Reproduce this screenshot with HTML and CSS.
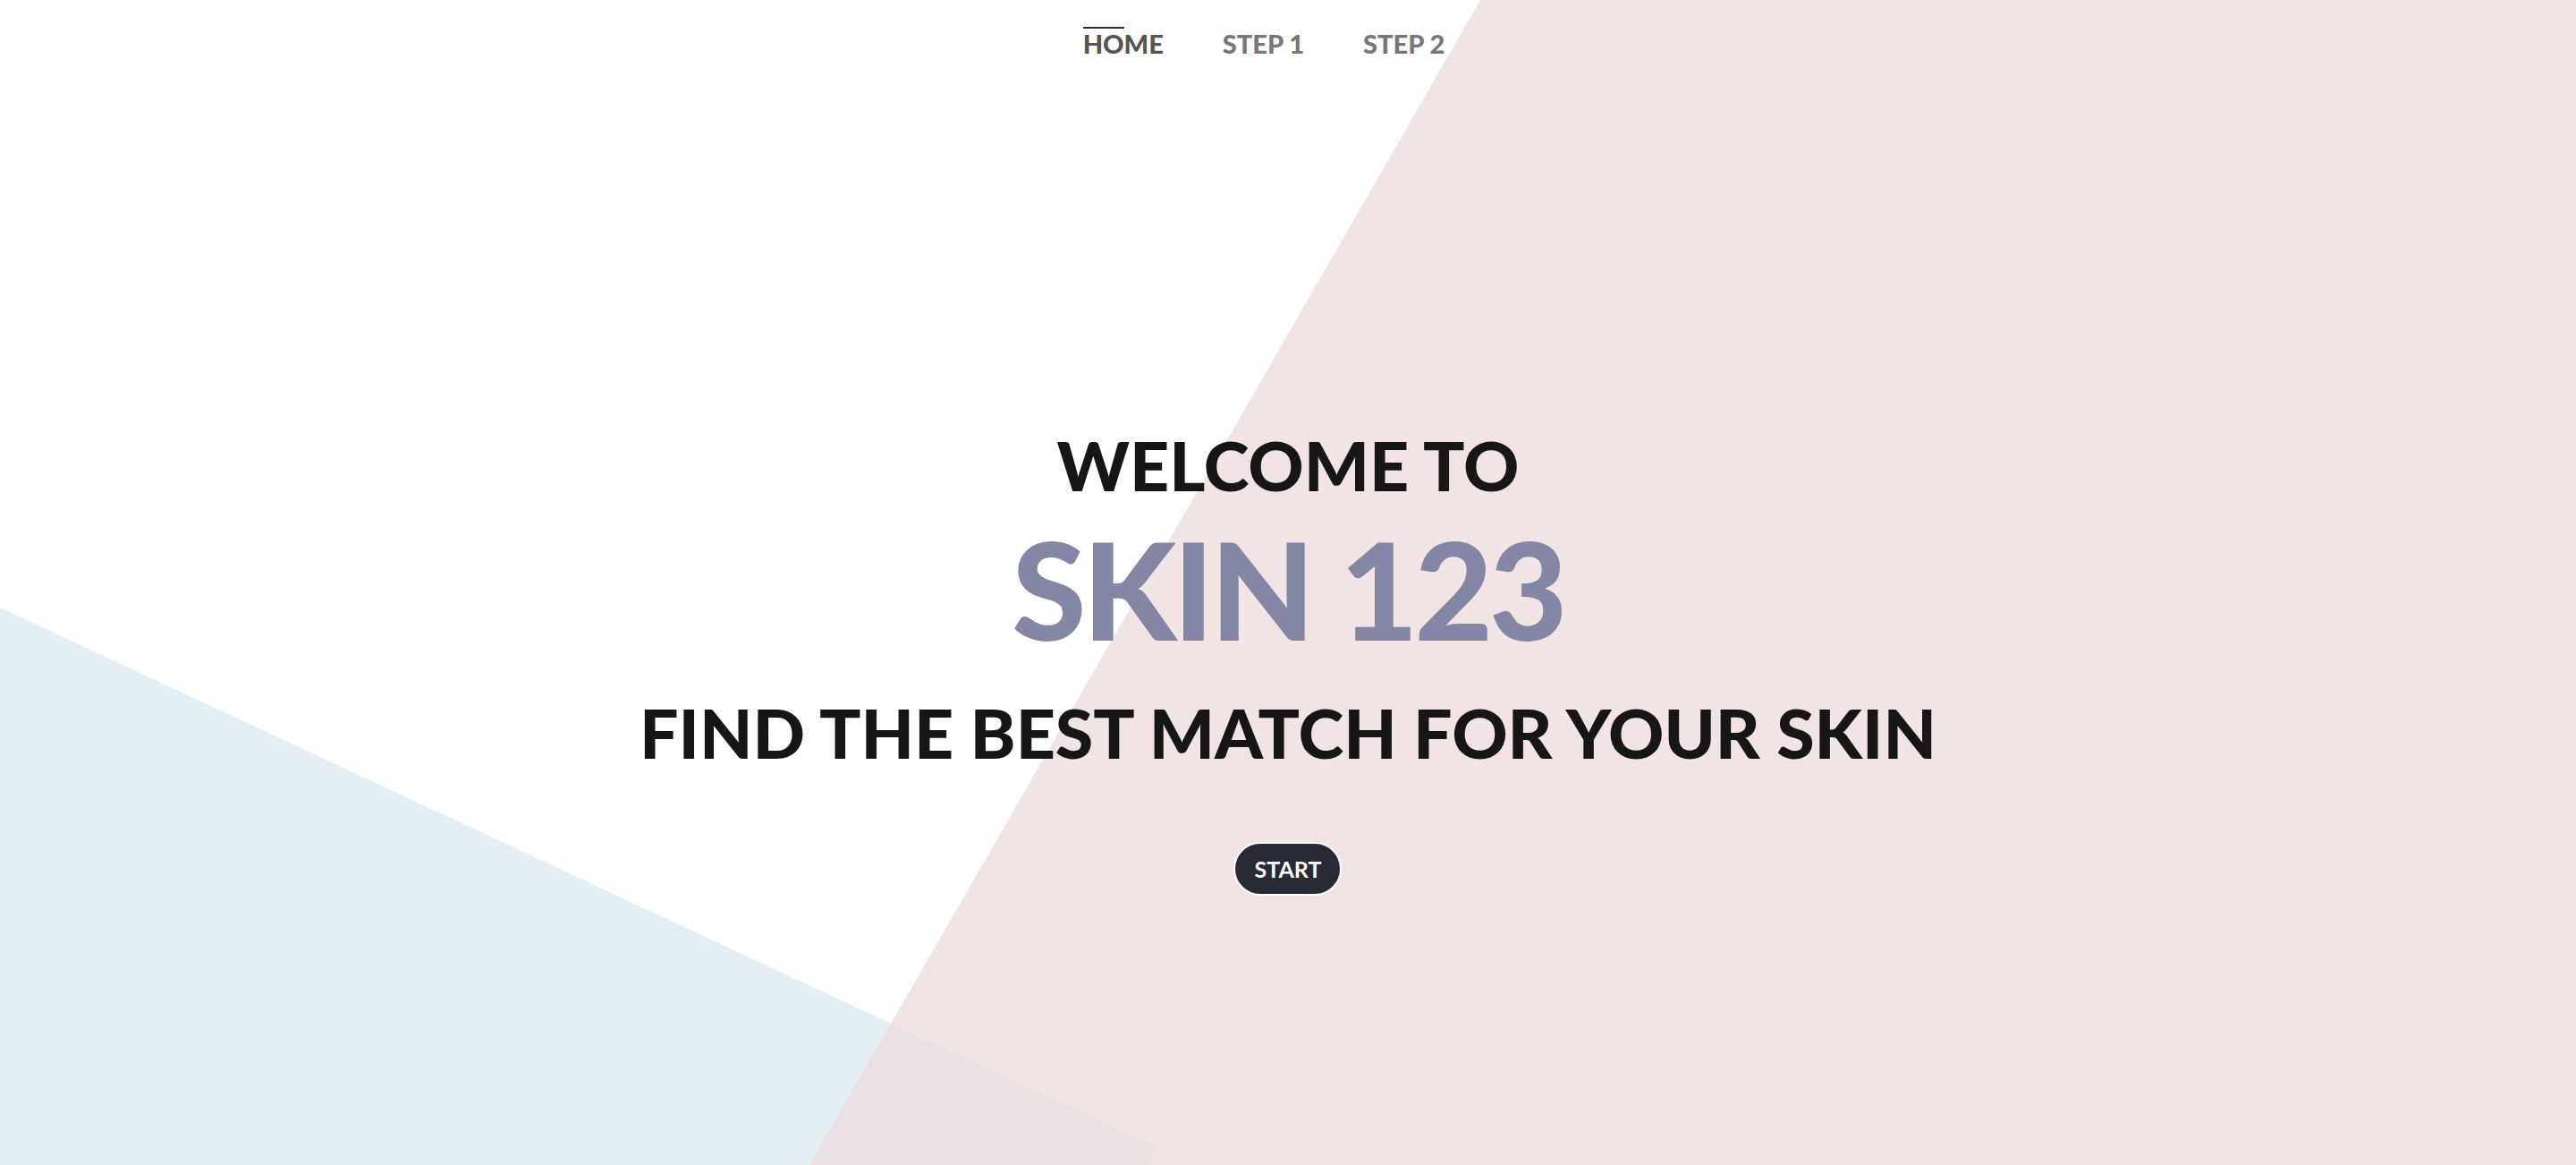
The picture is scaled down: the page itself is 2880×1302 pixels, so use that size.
FILE: index.html
```html
<!DOCTYPE html>
<html lang="en">
<head>
<meta charset="utf-8">
<title>Skin 123</title>
<link rel="stylesheet" href="styles.css">
</head>
<body>
<svg class="bg" viewBox="0 0 2880 1302" preserveAspectRatio="none" aria-hidden="true">
  <polygon class="blue" points="0,679 1292,1282 1283,1302 0,1302"/>
  <polygon class="pink" points="1655,0 2880,0 2880,1302 905,1302"/>
</svg>
<div class="page">
  <nav class="nav">
    <a class="nav-link active" href="#">HOME</a>
    <a class="nav-link" href="#">STEP 1</a>
    <a class="nav-link" href="#">STEP 2</a>
  </nav>
  <main class="hero">
    <h2 class="welcome">WELCOME TO</h2>
    <h1 class="brand">SKIN 123</h1>
    <h3 class="tagline">FIND THE BEST MATCH FOR YOUR SKIN</h3>
    <button class="start">START</button>
  </main>
</div>
</body>
</html>
```
FILE: styles.css
```css
html, body {
  margin: 0;
  padding: 0;
  width: 2880px;
  height: 1302px;
  overflow: hidden;
  background: #ffffff;
  font-family: "Lato", "Liberation Sans", sans-serif;
}

.bg {
  position: absolute;
  left: 0;
  top: 0;
  width: 2880px;
  height: 1302px;
  z-index: 0;
}

.blue { fill: #e3eef5; }
.pink { fill: rgb(238, 219, 219); fill-opacity: 0.75; }

.page {
  position: relative;
  z-index: 1;
  display: flex;
  flex-direction: column;
  align-items: center;
}

.nav {
  display: flex;
  gap: 66px;
  padding-top: 34px;
  padding-right: 54px;
}

.nav-link {
  position: relative;
  font-size: 29px;
  line-height: 1;
  font-weight: 900;
  color: #777777;
  text-decoration: none;
  letter-spacing: 0;
}

.nav-link.active { color: #555555; }

.nav-link.active::before {
  content: "";
  position: absolute;
  left: 0;
  top: -4px;
  width: 46px;
  height: 2px;
  background: #2a2d3a;
}

.hero {
  display: flex;
  flex-direction: column;
  align-items: center;
  margin-top: 418px;
}

.welcome, .brand, .tagline {
  margin: 0;
  line-height: 1;
  font-weight: 900;
  text-align: center;
}

.welcome {
  font-size: 77px;
  color: #161616;
  letter-spacing: 0;
}

.brand {
  margin-top: 24px;
  font-size: 151px;
  color: #8387a5;
  letter-spacing: -4px;
}

.tagline {
  margin-top: 47px;
  font-size: 77px;
  color: #161616;
  letter-spacing: 0;
}

.start {
  margin-top: 84px;
  width: 121px;
  height: 60px;
  border: 2px solid #ffffff;
  border-radius: 30px;
  background: #282a36;
  color: #ffffff;
  font-family: "Lato", "Liberation Sans", sans-serif;
  font-size: 25px;
  font-weight: 700;
  padding: 0;
  cursor: pointer;
}
```
